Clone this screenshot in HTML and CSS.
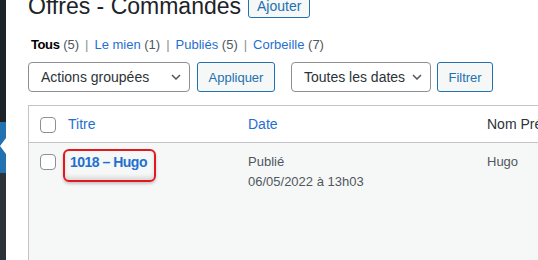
FILE: index.html
```html
<!DOCTYPE html>
<html lang="fr">
<head>
<meta charset="utf-8">
<title>Offres - Commandes</title>
<link rel="stylesheet" href="styles.css">
</head>
<body>
<div class="layout">
  <nav class="adminmenu">
    <div class="menu-top"></div>
    <div class="menu-current"><span class="menu-arrow"></span></div>
    <div class="menu-sub"></div>
  </nav>
  <main class="wrap">
    <div class="title-row">
      <h1 class="page-title">Offres - Commandes</h1>
      <a class="btn btn-title" href="#">Ajouter</a>
    </div>
    <ul class="subsubsub">
      <li><a class="current" href="#">Tous</a> <span class="count">(5)</span></li>
      <li class="sep">|</li>
      <li><a href="#">Le mien</a> <span class="count">(1)</span></li>
      <li class="sep">|</li>
      <li><a href="#">Publiés</a> <span class="count">(5)</span></li>
      <li class="sep">|</li>
      <li><a href="#">Corbeille</a> <span class="count">(7)</span></li>
    </ul>
    <div class="tablenav">
      <div class="select select-bulk">
        <span>Actions groupées</span>
        <svg class="chev" width="10" height="6" viewBox="0 0 10 6"><path d="M1 1 L5 5 L9 1" fill="none" stroke="#50575e" stroke-width="1.5"/></svg>
      </div>
      <button class="btn btn-action">Appliquer</button>
      <div class="select select-dates">
        <span>Toutes les dates</span>
        <svg class="chev" width="10" height="6" viewBox="0 0 10 6"><path d="M1 1 L5 5 L9 1" fill="none" stroke="#50575e" stroke-width="1.5"/></svg>
      </div>
      <button class="btn btn-action btn-filter">Filtrer</button>
    </div>
    <div class="table">
      <div class="row head">
        <div class="cell check"><span class="cb"></span></div>
        <div class="cell col-title"><a href="#">Titre</a></div>
        <div class="cell col-date"><a href="#">Date</a></div>
        <div class="cell col-author">Nom Prénom</div>
      </div>
      <div class="row item">
        <div class="cell check"><span class="cb"></span></div>
        <div class="cell col-title">
          <a class="row-title" href="#">1018 – Hugo</a>
          <span class="mark"></span>
        </div>
        <div class="cell col-date">Publié<br>06/05/2022 à 13h03</div>
        <div class="cell col-author">Hugo</div>
      </div>
    </div>
  </main>
</div>
</body>
</html>
```
FILE: styles.css
```css
* { box-sizing: border-box; }

body {
  margin: 0;
  height: 260px;
  overflow: hidden;
  background: #fff;
  color: #2c3338;
  font-family: "Liberation Sans", Arial, sans-serif;
}

a { text-decoration: none; color: #1f6fd0; }

.layout {
  display: flex;
  height: 260px;
}

/* admin sidebar (cropped edge) */
.adminmenu {
  width: 6px;
  flex: none;
  display: flex;
  flex-direction: column;
  background: #1d2327;
}
.menu-top { height: 122px; }
.menu-current {
  height: 51px;
  background: #2271b1;
  position: relative;
}
.menu-arrow {
  position: absolute;
  right: 0;
  top: 16px;
  width: 0;
  height: 0;
  border-right: 6px solid #fff;
  border-top: 8px solid transparent;
  border-bottom: 8px solid transparent;
}
.menu-sub { flex: 1; background: #2c3338; }

/* main */
.wrap {
  flex: 1;
  min-width: 0;
  padding-left: 22px;
  display: flex;
  flex-direction: column;
  overflow: hidden;
}

.title-row {
  display: flex;
  align-items: center;
  gap: 7px;
  height: 30px;
  margin-top: -9px;
  flex: none;
}
.page-title {
  margin: 0;
  font-size: 23px;
  font-weight: 400;
  line-height: 30px;
  color: #1d2327;
  white-space: nowrap;
}

.btn {
  display: inline-flex;
  align-items: center;
  font-family: inherit;
  color: #2271b1;
  background: #f6f7f7;
  border: 1px solid #2271b1;
  border-radius: 3px;
  white-space: nowrap;
}
.btn-title {
  height: 24px;
  padding: 0 8px;
  font-size: 14px;
  line-height: 22px;
}
.btn-action {
  height: 30px;
  padding: 0 10.5px;
  font-size: 13px;
  margin-left: 7px;
}
.btn-filter { margin-left: 6px; }

.subsubsub {
  list-style: none;
  margin: 11px 0 0 3px;
  padding: 0;
  display: flex;
  height: 26px;
  font-size: 13px;
  line-height: 26px;
  white-space: nowrap;
  flex: none;
}
.subsubsub a.current {
  color: #000;
  font-weight: 700;
  letter-spacing: -0.4px;
}
.subsubsub .count { color: #50575e; }
.subsubsub .sep {
  color: #8c8f94;
  padding: 0 6px;
}

.tablenav {
  display: flex;
  align-items: center;
  height: 30px;
  margin-top: 4px;
  flex: none;
}
.select {
  height: 30px;
  display: flex;
  align-items: center;
  justify-content: space-between;
  padding: 0 8px 0 12px;
  border: 1px solid #8c8f94;
  border-radius: 4px;
  background: #fff;
  font-size: 14px;
  color: #2c3338;
  white-space: nowrap;
}
.select-bulk { width: 162px; }
.select-dates { width: 140px; margin-left: 16px; }
.chev { flex: none; }

/* table */
.table {
  margin-top: 13px;
  flex: 1;
  width: 720px;
  display: flex;
  flex-direction: column;
  border: 1px solid #c3c4c7;
  border-bottom: none;
}
.row {
  display: grid;
  grid-template-columns: 29px 180px 239px 1fr;
}
.head {
  background: #fff;
  border-bottom: 1px solid #c3c4c7;
}
.cell {
  padding: 9px 10px;
  line-height: 20px;
  white-space: nowrap;
}
.head .cell {
  padding-top: 8px;
  padding-bottom: 8px;
  font-size: 14px;
  color: #2c3338;
}
.cell.check { padding-left: 11px; padding-right: 0; }

.cb {
  display: block;
  width: 16px;
  height: 16px;
  border: 1px solid #8c8f94;
  border-radius: 4px;
  background: #fff;
}
.head .cb { margin-top: 3px; }
.item .cb { margin-top: 2px; }

.item {
  flex: 1;
  background: #f6f7f7;
  align-items: start;
  font-size: 13px;
  color: #50575e;
}
.item .col-title { position: relative; }
.row-title {
  margin-left: 2px;
  font-size: 14px;
  font-weight: 700;
  letter-spacing: -0.5px;
}
.mark {
  position: absolute;
  left: 5px;
  top: 6px;
  width: 93px;
  height: 33px;
  border: 2px solid #e3171e;
  border-radius: 6px;
  box-shadow: 0 2px 3px rgba(0, 0, 0, 0.2), inset 0 -3px 4px rgba(0, 0, 0, 0.12);
}
```
